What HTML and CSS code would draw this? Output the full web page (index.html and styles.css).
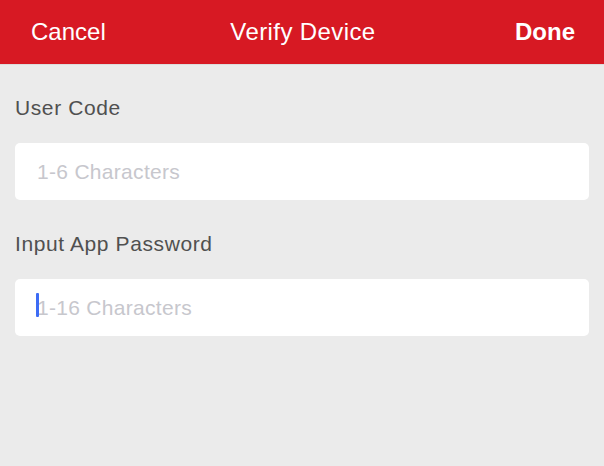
FILE: index.html
```html
<!DOCTYPE html>
<html lang="en">

<head>
    <meta charset="UTF-8">
    <meta name="viewport" content="width=device-width, initial-scale=1.0">
    <title>Verify Device</title>
    <link rel="stylesheet" href="styles.css">
</head>

<body>
    <header class="nav-bar">
        <span class="nav-cancel">Cancel</span>
        <h1 class="nav-title">Verify Device</h1>
        <span class="nav-done">Done</span>
    </header>
    <div class="form">
        <label class="field-label" for="user-code">User Code</label>
        <div class="field">
            <input id="user-code" class="field-input" type="text" placeholder="1-6 Characters">
        </div>
        <label class="field-label" for="app-password">Input App Password</label>
        <div class="field">
            <input id="app-password" class="field-input" type="password" placeholder="1-16 Characters">
            <span class="caret"></span>
        </div>
    </div>
</body>

</html>
```

FILE: styles.css
```css
body {
    margin: 0;
    height: 466px;
    background: #ebebeb;
    font-family: "Liberation Sans", Arial, sans-serif;
}

.nav-bar {
    display: grid;
    grid-template-columns: 1fr auto 1fr;
    align-items: center;
    height: 64px;
    padding: 0 29px 0 31px;
    background: #d71923;
    border-bottom: 1px solid #dcdcdc;
    color: #fff;
    font-size: 24px;
}

.nav-title {
    margin: 0;
    font-size: 24px;
    font-weight: normal;
    letter-spacing: 0.4px;
}

.nav-done {
    justify-self: end;
    font-weight: bold;
}

.form {
    display: flex;
    flex-direction: column;
    padding: 31px 15px 0;
}

.field-label {
    font-size: 21px;
    line-height: 24px;
    letter-spacing: 0.6px;
    color: #505050;
    margin-bottom: 23px;
}

.field {
    position: relative;
    margin-bottom: 32px;
}

.field-input {
    display: block;
    box-sizing: border-box;
    width: 100%;
    height: 57px;
    margin: 0;
    padding: 0 22px;
    border: none;
    border-radius: 5px;
    background: #fff;
    font-family: inherit;
    font-size: 21px;
    letter-spacing: 0.3px;
    color: #333;
    outline: none;
}

.field-input::placeholder {
    color: #c7c7cd;
}

.caret {
    position: absolute;
    left: 21px;
    top: 14px;
    width: 3px;
    height: 24px;
    border-radius: 1px;
    background: #3d6cf5;
}
```
